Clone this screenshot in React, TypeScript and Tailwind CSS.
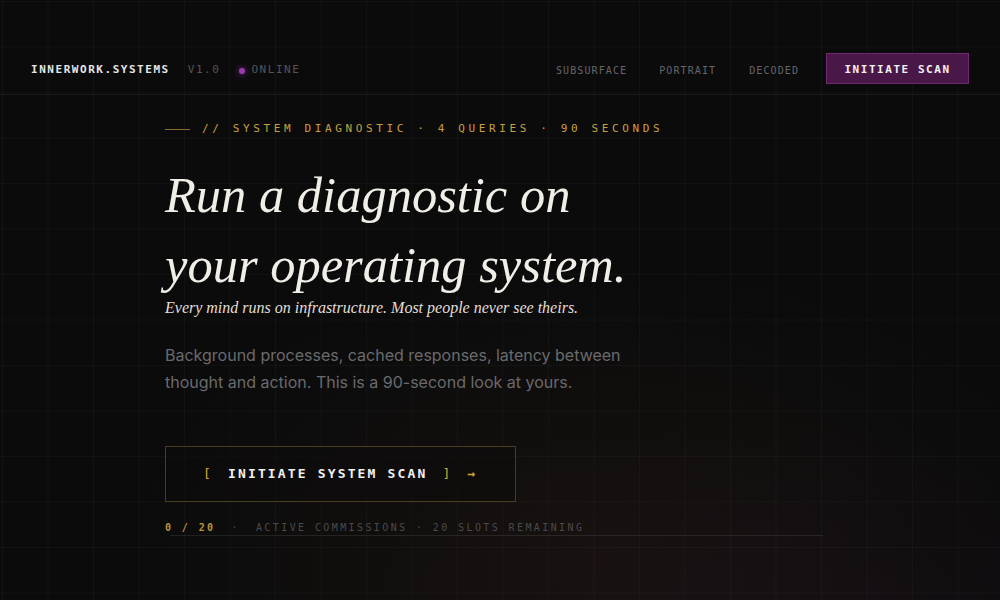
import React from "react";

const mono = "font-['DejaVu_Sans_Mono','Liberation_Mono',monospace]";
const serif = "font-['Liberation_Serif','DejaVu_Serif',serif]";

export default function App() {
  return (
    <div className="relative h-[600px] w-full overflow-hidden bg-[#0b0b0c] text-[#ececec]">
      {/* fondo: rejilla + brillo */}
      <div className="pointer-events-none absolute inset-0 bg-[linear-gradient(rgba(255,255,255,0.028)_1px,transparent_1px),linear-gradient(90deg,rgba(255,255,255,0.028)_1px,transparent_1px)] bg-[size:45.5px_45.5px] bg-[position:2px_1px]" />
      <div className="pointer-events-none absolute inset-0 bg-[radial-gradient(ellipse_480px_300px_at_600px_560px,rgba(110,75,30,0.10),transparent)]" />
      <div className="pointer-events-none absolute inset-0 bg-[radial-gradient(ellipse_420px_220px_at_760px_640px,rgba(110,40,120,0.07),transparent)]" />

      <div className="relative flex flex-col">
        {/* Header */}
        <header className={`flex items-center justify-between border-b border-white/[0.06] pl-[31px] pr-[31px] pt-[53px] pb-[10px] ${mono}`}>
          <div className="flex items-center pt-[4px] text-[11px] tracking-[0.14em]">
            <span className="font-bold text-[#e6e6e6]">INNERWORK.SYSTEMS</span>
            <span className="ml-[18px] text-[#555558]">V1.0</span>
            <span className="ml-[19px] h-[6px] w-[6px] rounded-full bg-[#9a3bb3] shadow-[0_0_6px_rgba(160,60,190,0.8)]" />
            <span className="ml-[6px] text-[#555558]">ONLINE</span>
          </div>
          <nav className="flex items-center text-[10px] tracking-[0.11em] text-[#66666a]">
            <span className="pt-[4px]">SUBSURFACE</span>
            <span className="ml-[32px] pt-[4px]">PORTRAIT</span>
            <span className="ml-[33px] pt-[4px]">DECODED</span>
            <button className="ml-[27px] flex h-[31px] w-[143px] items-center justify-center border border-[#6d2a70] bg-[#4a1848] pt-[3px] text-[11px] font-bold tracking-[0.14em] text-[#f2f2f2]">
              INITIATE SCAN
            </button>
          </nav>
        </header>

        {/* Hero */}
        <main className="flex flex-col pl-[165px] pt-[26px]">
          <div className={`flex items-center gap-[12px] text-[11px] tracking-[0.33em] text-[#c8a040] ${mono}`}>
            <span className="h-px w-[25px] bg-[#8a6d2c]" />
            <span>// SYSTEM DIAGNOSTIC · 4 QUERIES · 90 SECONDS</span>
          </div>

          <h1 className={`mt-[22px] text-[50.5px] italic leading-[70px] text-[#f1eee8] ${serif}`}>
            Run a diagnostic on
            <br />
            your operating system.
          </h1>
          <p className={`-mt-[2px] text-[16px] italic leading-[20px] text-[#e2ded6] ${serif}`}>
            Every mind runs on infrastructure. Most people never see theirs.
          </p>

          <p className="mt-[24px] w-[480px] font-['Inter',sans-serif] text-[16px] leading-[27px] text-[#6a6a6c]">
            Background processes, cached responses, latency between thought and action. This is a 90-second look at yours.
          </p>

          <button className={`mt-[50px] flex h-[56px] w-[351px] items-center gap-[15px] border border-[#4a3d1e] bg-[#0d0c0c]/60 pl-[37px] text-[13px] font-bold tracking-[0.165em] ${mono}`}>
            <span className="font-normal text-[#d4a52e]">[</span>
            <span className="text-[#f0f0f0]">INITIATE SYSTEM SCAN</span>
            <span className="font-normal text-[#d4a52e]">]</span>
            <span className="text-[13px] text-[#d4a52e]">→</span>
          </button>

          <div className={`mt-[19px] flex items-center gap-[16px] text-[10px] leading-[13px] tracking-[0.24em] ${mono}`}>
            <span className="font-bold text-[#b8923a]">0 / 20</span>
            <span className="text-[#4a4a4c]">·</span>
            <span className="text-[#4a4a4c]">ACTIVE COMMISSIONS · 20 SLOTS REMAINING</span>
          </div>
          <div className="ml-[5px] mt-[1px] h-px w-[653px] bg-white/[0.09]" />
        </main>
      </div>
    </div>
  );
}
